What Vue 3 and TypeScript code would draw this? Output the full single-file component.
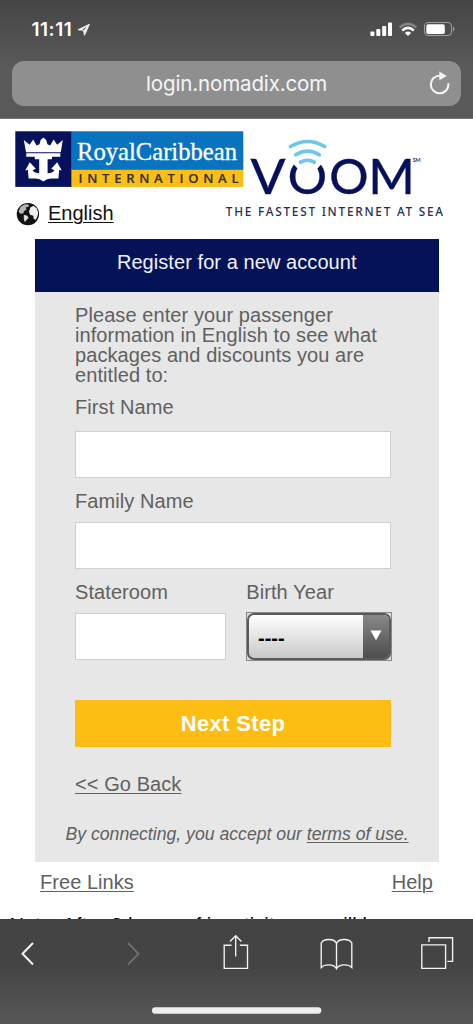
<script setup lang="ts">
import { ref } from 'vue'

const firstName = ref<string>('')
const familyName = ref<string>('')
const stateroom = ref<string>('')
</script>

<template>
  <div class="phone">
    <header class="browser-bar">
      <div class="status">
        <span class="time">11:11</span>
        <svg class="locator" width="14" height="14" viewBox="0 0 14 14"><path d="M1 6.8 12.4 1.3 7.5 12.3 6.6 7.3Z" fill="none" stroke="#eee" stroke-width="1" stroke-linejoin="round" /><path d="M12.4 1.3 1 6.8 5 7 9.8 3.6 6.6 7.4 7.5 12.3Z" fill="#eee" /></svg>
        <svg class="signals" width="88" height="18" viewBox="0 0 88 18">
          <g fill="#fff">
            <rect x="1.4" y="11.4" width="4" height="4.6" rx="1" /><rect x="7.3" y="9" width="4" height="7" rx="1" /><rect x="13.2" y="6" width="4" height="10" rx="1" /><rect x="19" y="2.5" width="4" height="13.5" rx="1" />
          </g>
          <g fill="none" stroke-width="2.6">
            <path d="M30.6 7.2Q39 .6 47.4 7.2" stroke="#858585" />
            <path d="M33.2 10.5Q39 5.3 44.8 10.5" stroke="#fff" />
          </g>
          <path d="M35.9 12.9Q39 10 42.1 12.9L39 16Z" fill="#fff" />
          <rect x="55.5" y="2.5" width="27" height="13" rx="3.5" fill="none" stroke="#a0a0a0" />
          <rect x="57.3" y="4.2" width="18.5" height="9.8" rx="1.8" fill="#fff" />
          <path d="M84 6.5Q87 9 84 11.5Z" fill="#a0a0a0" />
        </svg>
      </div>
      <div class="address">
        <span class="url">login.nomadix.com</span>
        <svg class="reload" width="22" height="24" viewBox="0 0 22 24"><path d="M19.4 13A8.8 8.8 0 1 1 11 4.7" fill="none" stroke="#f4f4f4" stroke-width="2.1" stroke-linecap="round" /><path d="M10.3.6 17.8 4.9 10.3 9.2Z" fill="#f4f4f4" /></svg>
      </div>
    </header>

    <main class="page">
      <div class="brand">
        <div class="left">
          <svg class="royal" width="229" height="57" viewBox="15 131 229 57">
            <rect x="15.3" y="131.3" width="56.5" height="55.6" fill="#07105a" />
            <rect x="71.5" y="131.3" width="171.8" height="39" fill="#0873bf" />
            <rect x="71.5" y="169.8" width="171.8" height="17.1" fill="#fdbe13" />
            <g fill="#fff">
              <path d="M23.8 140 29.6 144.8 33.2 139.5 36.6 145.4 39.5 144.2 40.6 140 43.4 137.4 46.2 140 47.4 144.2 50.2 145.4 53.6 139.5 57.2 144.8 62.8 140 60.8 152.2H26Z" />
              <path d="M26.3 153.2H60.3V156.8H52V159.3H47.6V173.3Q52.6 173.3 54.4 170.3L51.2 168.7 57.2 162.2 61.8 170.4 59.2 169.8 58.4 178.6H51.2Q47 178.6 43.4 181.5 39.8 178.6 35.6 178.6H28.6L27.8 169.8 25.2 170.4 29.8 162.2 35.8 168.7 32.6 170.3Q34.4 173.3 39.2 173.3V159.3H34.8V156.8H26.3Z" />
            </g>
            <text x="77" y="160" textLength="160" lengthAdjust="spacingAndGlyphs" class="royal-name">RoyalCaribbean</text>
            <text x="78.5" y="182.6" textLength="160" class="royal-sub">INTERNATIONAL</text>
          </svg>
          <div class="language">
            <svg width="24" height="24" viewBox="0 0 24 24"><circle cx="11.9" cy="12.1" r="11.2" fill="#111" /><path d="M4.6 4.8 8.2 2.4 12.3 2.2 13 4.6 9.8 5.4 10.6 7.5 8.2 8.9 7.2 11.5 4.2 11.8 2.5 9.4Z" fill="#b4b4b4" /><path d="M7.8 12.7 11.4 13.8 12.6 16.1 10.2 18.2 8.9 20.2 7.8 17Z" fill="#ddd" /><path d="M14.3 5.6 17.5 3.7 20.8 6.6 22.2 10.8 21.5 14.2 19.8 17.8 17.6 16.8 17.4 13.8 14 12.7 13 9.8Z" fill="#eee" /></svg>
            <a>English</a>
          </div>
        </div>
        <svg class="voom" width="222" height="86" viewBox="223 134 222 86">
          <g class="voom-word">
            <text x="250.6" y="193.5" textLength="35" lengthAdjust="spacingAndGlyphs">V</text>
            <text x="287.7" y="193.5" textLength="39.3" lengthAdjust="spacingAndGlyphs">O</text>
            <text x="329.2" y="193.5" textLength="39.3" lengthAdjust="spacingAndGlyphs">O</text>
            <text x="368.4" y="193.5" textLength="46.2" lengthAdjust="spacingAndGlyphs">M</text>
          </g>
          <path d="M293 155H322L321.5 164 317.5 168.5H297.5L293.5 164Z" fill="#fff" />
          <g fill="none" stroke="#70c6e6" stroke-width="3.7" stroke-linecap="round">
            <path d="M290.5 146.5Q307.8 136.5 324.7 146.5" /><path d="M295.7 154.8Q307.8 147.3 319.3 154.8" /><path d="M300.5 162.2Q307.8 158.3 314.3 162.2" />
          </g>
          <text x="412.7" y="162.2" textLength="8" lengthAdjust="spacingAndGlyphs" class="mark">SM</text>
          <text x="225.8" y="216.3" textLength="217.3" class="slogan">THE FASTEST INTERNET AT SEA</text>
        </svg>
      </div>

      <section class="card">
        <h1>Register for a new account</h1>
        <form class="body" @submit.prevent>
          <p class="intro">Please enter your passenger<br>information in English to see what<br>packages and discounts you are<br>entitled to:</p>
          <label class="first">First Name<input v-model="firstName" type="text"></label>
          <label class="family">Family Name<input v-model="familyName" type="text"></label>
          <div class="pair">
            <label>Stateroom<input v-model="stateroom" type="text"></label>
            <div class="year">
              <span>Birth Year</span>
              <div class="select">
                <div class="select-face">
                  <span class="value">----</span>
                  <span class="arrow"><svg width="12" height="11" viewBox="0 0 12 11"><path d="M.5.5H11.5L6 10.3Z" fill="#fff" /></svg></span>
                </div>
              </div>
            </div>
          </div>
          <button type="submit">Next Step</button>
          <a class="back">&lt;&lt; Go Back</a>
        </form>
        <p class="terms">By connecting, you accept our <a>terms of use.</a></p>
      </section>
      <nav class="links"><a>Free Links</a><a>Help</a></nav>
      <p class="note">Note: After 8 hours of inactivity you will be</p>
    </main>

    <footer class="toolbar">
      <svg width="473" height="105" viewBox="0 919 473 105" fill="none" stroke="#f4f4f4" stroke-width="1.35">
        <path d="M33 943 22.5 953.8 33 964.5" stroke-width="2" />
        <path d="M128 943 138.5 953.8 128 964.5" stroke="#777" stroke-width="1.6" />
        <path d="M231.5 945.2H224.2V968.3H247.5V945.2H239.8M235.7 956.5V936.5M230 941.5 235.7 935.8 241.4 941.5" />
        <path d="M336.5 943.5V968.5M336.5 943.5Q335 939.5 328.7 939.5 323 939.5 321.2 943V967.5Q323.5 964.8 328.7 964.8 334.5 964.8 336.5 968.7 338.5 964.8 344.3 964.8 349.5 964.8 351.8 967.5V943Q350 939.5 344.3 939.5 338 939.5 336.5 943.5Z" />
        <path d="M421.8 944.8H445.6V968.4H421.8ZM429 942V937.7H452.6V961.4H447.3" />
        <rect x="152" y="1007.2" width="169.3" height="6.6" rx="3.3" fill="#eee" stroke="none" />
      </svg>
    </footer>
  </div>
</template>

<style>
body { margin: 0; overflow: hidden; }
</style>

<style scoped>
* { box-sizing: border-box; }
.phone { width: 473px; height: 1024px; display: flex; flex-direction: column; background: #fff; color: #606060; font: 20px/20px "Liberation Sans", Arial, sans-serif; overflow: hidden; }
p, h1 { margin: 0; font-weight: normal; }
a { text-decoration: underline; text-decoration-thickness: 1.2px; text-underline-offset: 2px; }
.browser-bar { height: 118.5px; flex: none; padding: 0 12px; background: linear-gradient(#454545, #5a5a5a 58%, #595959); border-bottom: 1px solid #777; }
.status { height: 60.5px; padding: 20px 4px 0 19.5px; display: flex; align-items: flex-start; color: #fff; }
.time { font: 600 19px/20px Inter, sans-serif; letter-spacing: .5px; width: 45px; white-space: nowrap; }
.locator { margin: 3px 0 0 .5px; }
.signals { margin-left: auto; }
.address { height: 45.5px; border-radius: 12px; background: #8f8f8f; display: flex; align-items: center; padding: 0 10px 0 134px; }
.url { font: 20.5px/24px Inter, sans-serif; color: #f5f5f5; letter-spacing: -.13px; white-space: nowrap; padding-top: 1px; }
.reload { margin-left: auto; }
.page { height: 800.5px; flex: none; padding-top: 12.5px; overflow: hidden; }
.brand { display: flex; height: 108.3px; padding-left: 15px; }
.left { width: 208px; flex: none; }
svg { display: block; overflow: visible; }
.language { display: flex; margin-top: 14px; gap: 8px; padding-left: 1px; color: #111; }
.language a { line-height: 22px; }
.voom { margin-top: 3px; }
.royal-name { font: 26px "Liberation Serif", serif; fill: #fff; stroke: #fff; stroke-width: .3px; }
.royal-sub { font: 600 13px "Open Sans", sans-serif; fill: #343246; stroke: #343246; stroke-width: .2px; }
.voom-word { font: 500 48.5px Lato, sans-serif; fill: #07105a; stroke: #07105a; stroke-width: .3px; }
.mark { font: 700 6px Lato, sans-serif; fill: #33386d; }
.slogan { font: 500 11.8px "Noto Sans", sans-serif; fill: #272c50; }
.card { width: 403.5px; height: 622.7px; margin-left: 35px; background: #e7e7e7; }
h1 { height: 53.2px; padding-top: 13px; background: #041258; color: #f1f3ff; font-size: 20px; letter-spacing: .07px; text-align: center; }
.body { padding: 12.3px 48px 0 40px; letter-spacing: .08px; }
.intro { height: 92px; white-space: nowrap; }
label { display: block; }
input { display: block; width: 100%; height: 47px; margin-top: 14.5px; border: 1.5px solid #cfcfcf; border-radius: 0; background: #fff; padding: 8px; font: inherit; outline: none; }
.first { height: 94.2px; }
.family { height: 91.3px; }
.family input, .pair input { margin-top: 11px; }
.pair { display: flex; gap: 19.5px; height: 117.6px; }
.pair label { width: 151.4px; flex: none; }
.year { width: 146px; flex: none; }
.year > span { display: block; letter-spacing: .1px; padding-left: .3px; }
.select { margin-top: 9.5px; height: 49px; padding: 0; border: 1px solid #888; background: #ddd; }
.select-face { height: 100%; border: 2px solid #5a5a5a; border-radius: 7px; display: flex; overflow: hidden; background: linear-gradient(#fff, #c9c9c9); }
.value { flex: 1; padding: 13px 0 0 9px; color: #000; font-weight: 700; }
.arrow { width: 26px; background: linear-gradient(#888, #4d4d4d); display: flex; justify-content: center; padding-top: 15px; }
button { display: block; width: 316px; height: 47px; border: 0; padding: 0; background: #fdbd13; color: #fff; font: 700 22px/47px "Liberation Sans", Arial, sans-serif; letter-spacing: .35px; }
.back { display: inline-block; margin-top: 27px; }
.terms { margin: 30px 0 0 30.5px; font-size: 17.65px; font-style: italic; white-space: nowrap; }
.links { display: flex; justify-content: space-between; padding: 10px 40px 0; letter-spacing: .05px; }
.note { margin: 23px 0 0 9.5px; color: #000; letter-spacing: .12px; white-space: nowrap; }
.toolbar { height: 105px; flex: none; background: linear-gradient(#434343, #444 45%, #555 90%); }
</style>
